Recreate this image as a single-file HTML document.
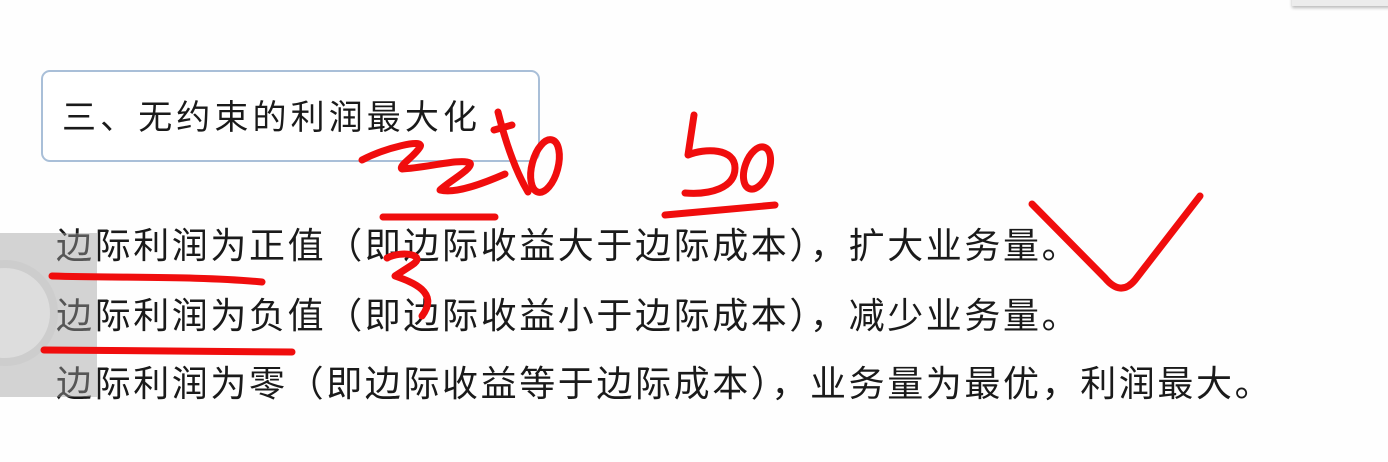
<!DOCTYPE html>
<html><head><meta charset="utf-8"><style>
html,body{margin:0;padding:0;width:1388px;height:462px;background:#fefefe;overflow:hidden;position:relative;font-family:"Liberation Sans","Noto Sans CJK SC",sans-serif;color:#1a1a1a}
.box{position:absolute;left:41px;top:70px;width:499px;height:92px;border:2px solid #a9bfd8;border-radius:9px;box-sizing:border-box;background:#fff}
.title{position:absolute;left:62px;top:96px;font-size:34px;letter-spacing:4.1px;line-height:44px;white-space:nowrap}
.line{position:absolute;left:56px;font-size:36px;letter-spacing:2.6px;line-height:44px;white-space:nowrap}
.ov{position:absolute;left:0;top:233px;width:97px;height:164px;background:rgba(160,160,160,.45)}
.circ{position:absolute;left:-40px;top:268px;width:90px;height:90px;border-radius:50%;background:rgba(225,225,225,.7);box-shadow:0 0 0 8px rgba(200,200,200,.5)}
.tr{position:absolute;left:1292px;top:-6px;width:100px;height:12px;background:#ececec;box-shadow:0 2px 3px #bbb}
svg{position:absolute;left:0;top:0}
</style></head><body>
<div class="tr"></div>
<div class="box"></div>
<div class="title">三、无约束的利润最大化</div>
<div class="line" style="top:224px">边际利润为正值（即边际收益大于边际成本），扩大业务量。</div>
<div class="line" style="top:294px">边际利润为负值（即边际收益小于边际成本），减少业务量。</div>
<div class="line" style="top:362px">边际利润为零（即边际收益等于边际成本），业务量为最优，利润最大。</div>
<div class="ov"></div><div class="circ"></div>
<svg width="1388" height="462" fill="none" stroke="#f00d0d" stroke-width="7" stroke-linecap="round" stroke-linejoin="round">
<path d="M362,160 C385,148 425,138 420,147 C414,157 398,166 402,169 C425,168 462,158 470,163 C474,168 448,182 440,190 C455,194 482,184 505,174"/>
<path d="M498,112 C505,140 515,170 528,192"/>
<path d="M494,130 L512,125"/>
<ellipse cx="545" cy="166" rx="13" ry="27" transform="rotate(15 545 166)"/>
<path d="M383,217 L495,217"/>
<path d="M694,115 L688,155 C705,148 735,148 735,168 C735,188 710,195 685,193"/>
<ellipse cx="757" cy="168" rx="12" ry="22" transform="rotate(20 757 168)"/>
<path d="M665,215 L775,205"/>
<path d="M1032,204 L1105,278 C1115,290 1125,292 1135,280 L1200,196"/>
<path d="M52,276 C120,278 200,276 262,282"/>
<path d="M44,350 L292,352"/>
<path d="M387,258 C402,250 428,255 412,265 L395,276 C412,282 440,292 422,316"/>
</svg>
</body></html>
